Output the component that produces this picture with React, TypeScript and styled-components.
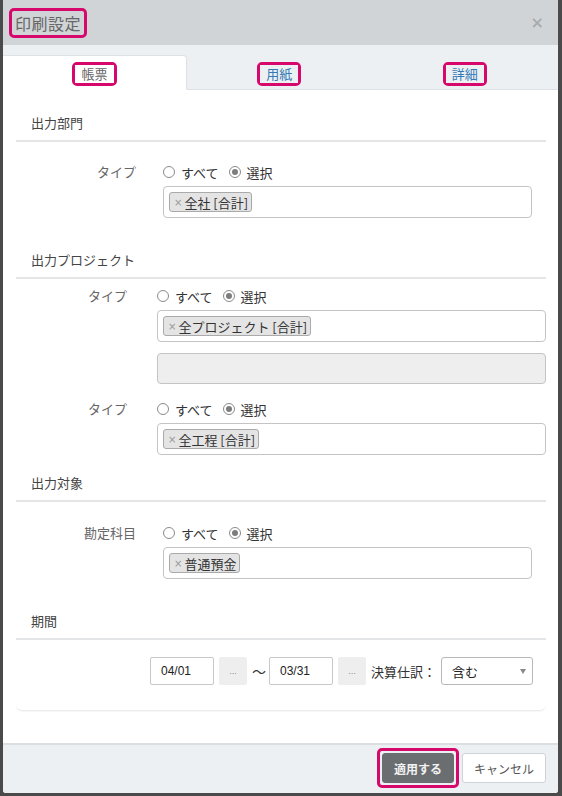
import React from "react";
import styled, { createGlobalStyle } from "styled-components";

const GlobalStyle = createGlobalStyle`
  html, body {
    margin: 0;
    padding: 0;
    background: #4a4a4a;
  }
  body {
    font-family: "Noto Sans CJK JP", "Noto Sans", sans-serif;
    font-size: 13px;
    color: #333;
  }
`;

const MARK = "#d6086c";

const Dialog = styled.div`
  width: 555px;
  height: 793px;
  margin-left: 3px;
  background: #fff;
  display: flex;
  flex-direction: column;
  border-radius: 0 0 3px 3px;
  overflow: hidden;
`;

const Header = styled.div`
  height: 45px;
  flex: none;
  background: #d1d4d7;
  display: flex;
  align-items: center;
  justify-content: space-between;
  padding: 0 14px 0 6px;
  box-sizing: border-box;
`;

const Mark = styled.span<{ $radius?: number }>`
  display: inline-flex;
  align-items: center;
  border: 3px solid ${MARK};
  border-radius: ${(p) => p.$radius ?? 5}px;
`;

const Title = styled.span`
  font-size: 16px;
  line-height: 24px;
  color: #666;
  padding: 0 3px;
  letter-spacing: 0.5px;
`;

const Close = styled.span`
  font-size: 16px;
  font-weight: bold;
  color: #a9acaf;
  line-height: 1;
  font-family: "DejaVu Sans", sans-serif;
`;

const TabBar = styled.div`
  height: 45px;
  flex: none;
  background: #edf0f3;
  padding-top: 10px;
  box-sizing: border-box;
  display: grid;
  grid-template-columns: 184px 1fr 1fr;
`;

const Tab = styled.div<{ $active?: boolean }>`
  display: flex;
  align-items: center;
  justify-content: center;
  background: ${(p) => (p.$active ? "#fff" : "transparent")};
  border: 1px solid ${(p) => (p.$active ? "#dde1e5" : "transparent")};
  border-left: none;
  border-bottom: ${(p) => (p.$active ? "1px solid #fff" : "1px solid #dde1e5")};
  border-radius: 0 4px 0 0;
  padding-top: 3px;
`;

const TabLabel = styled.span<{ $active?: boolean }>`
  padding: 1px 6px;
  line-height: 16px;
  font-size: 13px;
  color: ${(p) => (p.$active ? "#666" : "#337ab7")};
  background: ${(p) => (p.$active ? "#fff" : "#edf0f3")};
`;

const Body = styled.div`
  flex: 1;
  padding: 0 12px 0 13px;
  display: flex;
  flex-direction: column;
`;

const SectionHead = styled.div<{ $top: number }>`
  margin-top: ${(p) => p.$top}px;
  padding: 0 0 8px 15px;
  line-height: 18px;
  font-size: 13px;
  color: #444;
  border-bottom: 2px solid #e3e5e7;
`;

const FormGrid = styled.div<{ $label: number; $gap: number; $right: number; $top: number }>`
  display: grid;
  grid-template-columns: ${(p) => p.$label}px 1fr;
  column-gap: ${(p) => p.$gap}px;
  padding: ${(p) => p.$top}px ${(p) => p.$right}px 0 0;
  align-items: start;
`;

const FieldLabel = styled.div<{ $mt?: number }>`
  grid-column: 1;
  text-align: right;
  color: #666;
  line-height: 20px;
  margin-top: ${(p) => p.$mt ?? 0}px;
`;

const FieldControls = styled.div<{ $mt?: number }>`
  grid-column: 2;
  display: flex;
  flex-direction: column;
  margin-top: ${(p) => p.$mt ?? 0}px;
`;

const RadioRow = styled.div`
  display: flex;
  align-items: center;
  height: 20px;
  gap: 4px;
  margin-bottom: 4px;
`;

const RadioOption = styled.label`
  display: inline-flex;
  align-items: center;
  gap: 6px;
  margin-right: 6px;
  color: #333;
`;

const RadioDot = styled.span<{ $checked?: boolean }>`
  width: 10px;
  height: 10px;
  border-radius: 50%;
  border: 1px solid #8a8a8a;
  background: #fff;
  display: inline-flex;
  align-items: center;
  justify-content: center;
  &::after {
    content: "";
    width: 6px;
    height: 6px;
    border-radius: 50%;
    background: ${(p) => (p.$checked ? "#7d7d7d" : "transparent")};
  }
`;

const TagBox = styled.div<{ $disabled?: boolean; $h?: number }>`
  height: ${(p) => p.$h ?? 32}px;
  box-sizing: border-box;
  border: 1px solid #c4c4c4;
  border-radius: 4px;
  background: ${(p) => (p.$disabled ? "#eeeeee" : "#fff")};
  display: flex;
  align-items: center;
  padding: 0 5px;
  margin-top: ${(p) => (p.$disabled ? 11 : 0)}px;
`;

const Tag = styled.span`
  display: inline-flex;
  align-items: center;
  height: 20px;
  box-sizing: border-box;
  background: #e4e4e4;
  border: 1px solid #aaa;
  border-radius: 3px;
  padding: 0 3px 0 4px;
  color: #333;
  font-size: 13px;
`;

const TagX = styled.span`
  color: #999;
  font-size: 10px;
  margin-right: 2px;
  font-family: "DejaVu Sans", sans-serif;
`;

const Panel = styled.div`
  border-bottom: 1px solid #ececec;
  border-radius: 0 0 6px 6px;
  box-shadow: 0 1px 1px rgba(0, 0, 0, 0.03);
  padding: 17px 13px 25px 0;
  display: flex;
  justify-content: flex-end;
  align-items: center;
`;

const DateInput = styled.div`
  width: 64px;
  height: 28px;
  box-sizing: border-box;
  border: 1px solid #c8c8c8;
  border-radius: 2px;
  display: flex;
  align-items: center;
  padding-left: 10px;
  font-family: "Liberation Sans", sans-serif;
  font-size: 12px;
  color: #222;
`;

const PickButton = styled.div`
  width: 28px;
  height: 28px;
  background: #eeeeee;
  border-radius: 2px;
  margin-left: 5px;
  display: flex;
  align-items: center;
  justify-content: center;
  color: #888;
  font-size: 9px;
  font-family: "Liberation Sans", sans-serif;
`;

const Tilde = styled.span`
  margin: 0 3px 0 5px;
  font-size: 14px;
  color: #333;
`;

const InlineLabel = styled.span`
  margin: 0 5px;
  color: #333;
`;

const Select = styled.div`
  width: 92px;
  height: 28px;
  box-sizing: border-box;
  border: 1px solid #b8b8b8;
  border-radius: 3px;
  display: flex;
  align-items: center;
  justify-content: space-between;
  padding: 0 6px 0 10px;
  color: #222;
  &::after {
    content: "";
    border-left: 3px solid transparent;
    border-right: 3px solid transparent;
    border-top: 5px solid #888;
  }
`;

const Footer = styled.div`
  height: 50px;
  flex: none;
  background: #edf0f3;
  border-top: 2px solid #dcdfe2;
  box-sizing: border-box;
  display: flex;
  justify-content: flex-end;
  align-items: center;
  padding: 0 12px 2px 0;
  gap: 3px;
`;

const Button = styled.button<{ $primary?: boolean }>`
  height: 30px;
  box-sizing: border-box;
  border-radius: 3px;
  font-family: inherit;
  font-size: 12px;
  cursor: pointer;
  padding: 0;
  width: ${(p) => (p.$primary ? 72 : 84)}px;
  margin: ${(p) => (p.$primary ? "2px" : "0")};
  background: ${(p) => (p.$primary ? "#6b6e71" : "#fff")};
  color: ${(p) => (p.$primary ? "#f2f2f2" : "#555")};
  border: 1px solid ${(p) => (p.$primary ? "#6b6e71" : "#cfd2d5")};
  font-weight: ${(p) => (p.$primary ? "bold" : "normal")};
`;

type FieldProps = { label: string; tag?: string; mt?: number; extraEmpty?: boolean };

const Field: React.FC<FieldProps> = ({ label, tag, mt, extraEmpty }) => (
  <>
    <FieldLabel $mt={mt}>{label}</FieldLabel>
    <FieldControls $mt={mt}>
      <RadioRow>
        <RadioOption>
          <RadioDot />
          すべて
        </RadioOption>
        <RadioOption>
          <RadioDot $checked />
          選択
        </RadioOption>
      </RadioRow>
      <TagBox>
        {tag && (
          <Tag>
            <TagX>×</TagX>
            {tag}
          </Tag>
        )}
      </TagBox>
      {extraEmpty && <TagBox $disabled $h={31} />}
    </FieldControls>
  </>
);

const App: React.FC = () => (
  <>
    <GlobalStyle />
    <Dialog>
      <Header>
        <Mark>
          <Title>印刷設定</Title>
        </Mark>
        <Close>×</Close>
      </Header>
      <TabBar>
        <Tab $active>
          <Mark>
            <TabLabel $active>帳票</TabLabel>
          </Mark>
        </Tab>
        <Tab>
          <Mark>
            <TabLabel>用紙</TabLabel>
          </Mark>
        </Tab>
        <Tab>
          <Mark>
            <TabLabel>詳細</TabLabel>
          </Mark>
        </Tab>
      </TabBar>
      <Body>
        <SectionHead $top={24}>出力部門</SectionHead>
        <FormGrid $label={120} $gap={27} $right={14} $top={20}>
          <Field label="タイプ" tag="全社 [合計]" />
        </FormGrid>

        <SectionHead $top={33}>出力プロジェクト</SectionHead>
        <FormGrid $label={111} $gap={30} $right={0} $top={7}>
          <Field label="タイプ" tag="全プロジェクト [合計]" extraEmpty />
          <Field label="タイプ" tag="全工程 [合計]" mt={15} />
        </FormGrid>

        <SectionHead $top={19}>出力対象</SectionHead>
        <FormGrid $label={120} $gap={27} $right={14} $top={21}>
          <Field label="勘定科目" tag="普通預金" />
        </FormGrid>

        <SectionHead $top={33}>期間</SectionHead>
        <Panel>
          <DateInput>04/01</DateInput>
          <PickButton>...</PickButton>
          <Tilde>〜</Tilde>
          <DateInput>03/31</DateInput>
          <PickButton>...</PickButton>
          <InlineLabel>決算仕訳：</InlineLabel>
          <Select>含む</Select>
        </Panel>
      </Body>
      <Footer>
        <Mark>
          <Button $primary>適用する</Button>
        </Mark>
        <Button>キャンセル</Button>
      </Footer>
    </Dialog>
  </>
);

export default App;
